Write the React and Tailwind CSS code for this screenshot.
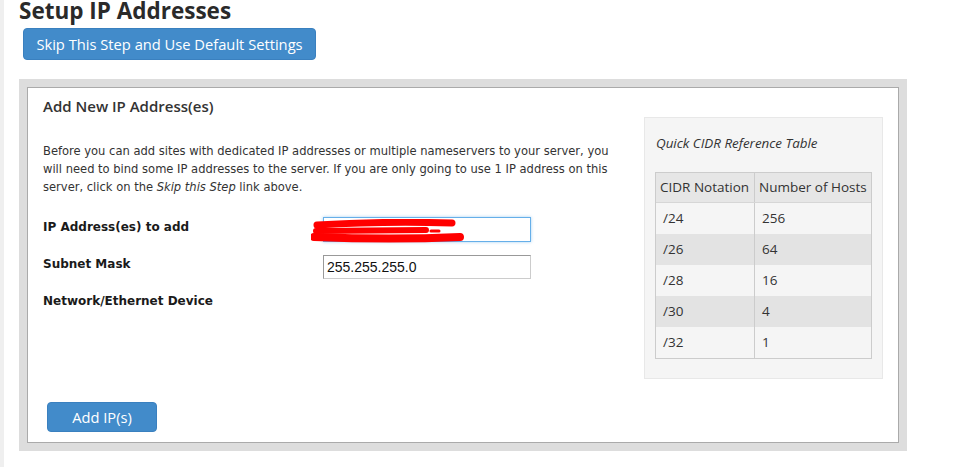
const cidrRows = [
  { cidr: '/24', hosts: '256' },
  { cidr: '/26', hosts: '64' },
  { cidr: '/28', hosts: '16' },
  { cidr: '/30', hosts: '4' },
  { cidr: '/32', hosts: '1' },
];

const openSans = { fontFamily: '"Open Sans", "Liberation Sans", sans-serif' };

function RedactedInput() {
  return (
    <div className="relative h-[25px] w-[208px]">
      <input
        type="text"
        readOnly
        className="h-full w-full border border-[#66afe9] bg-white px-[4px] shadow-[0_0_3px_rgba(102,175,233,0.6)] outline-none"
      />
      <svg
        className="pointer-events-none absolute left-[-12px] top-[2px]"
        width="160"
        height="26"
        viewBox="0 0 160 26"
        fill="none"
      >
        <path d="M6 6 Q70 2 141 4" stroke="#ff0000" strokeWidth="7" strokeLinecap="round" />
        <path d="M5 12 L115 11" stroke="#ff0000" strokeWidth="6" strokeLinecap="round" />
        <path d="M120 12 L128 12" stroke="#ff0000" strokeWidth="3" strokeLinecap="round" />
        <path d="M3 18 Q80 21 149 18" stroke="#ff0000" strokeWidth="8" strokeLinecap="round" />
      </svg>
    </div>
  );
}

function CidrTable() {
  return (
    <aside className="h-[262px] w-[239px] shrink-0 border border-[#e8e8e8] bg-[#f5f5f5] px-[10px] pt-[16px]" style={openSans}>
      <p className="pl-px text-[13.4px] italic leading-[18px] text-[#333]">Quick CIDR Reference Table</p>
      <div className="mt-[20px] border border-[#cccccc] text-[13.5px] text-[#333]">
        <div className="grid h-[30px] grid-cols-[99px_1fr] border-b border-[#d6d6d6] bg-[#e6e6e6]">
          <div className="flex items-center border-r border-[#cccccc] px-[4px]">CIDR Notation</div>
          <div className="flex items-center px-[4px]">Number of Hosts</div>
        </div>
        {cidrRows.map((row, i) => (
          <div
            key={row.cidr}
            className={`grid h-[31px] grid-cols-[99px_1fr] ${i % 2 === 1 ? 'bg-[#e3e3e3]' : 'bg-[#f5f5f5]'}`}
          >
            <div className="flex items-center border-r border-[#cccccc] px-[7px]">{row.cidr}</div>
            <div className="flex items-center px-[7px]">{row.hosts}</div>
          </div>
        ))}
      </div>
    </aside>
  );
}

export default function App() {
  return (
    <div className="flex min-h-[467px] bg-white">
      <div className="w-[4px] shrink-0 bg-[#efefef]" />
      <div className="flex-1 pl-[15px]">
        <h1 className="pt-px text-[22.5px] font-bold leading-[20px] text-[#2a2a2a]" style={openSans}>
          Setup IP Addresses
        </h1>
        <button
          type="button"
          className="ml-[4px] mt-[7px] h-[32px] w-[293px] rounded-[4px] border border-[#3a80bf] bg-[#428bca] text-[14.7px] text-white"
          style={openSans}
        >
          Skip This Step and Use Default Settings
        </button>

        <div className="mt-[19px] w-[888px] bg-[#dddddd] p-[8px]">
          <div className="border border-[#aaaaaa] bg-white px-[15px] pb-[10px] pt-[8px]">
            <h2 className="text-[15px] font-semibold leading-[20px] text-[#333]" style={openSans}>
              Add New IP Address(es)
            </h2>

            <div className="mt-px flex">
              <div className="min-w-0 flex-1">
                <p
                  className="mt-[25px] whitespace-nowrap text-[12.8px] leading-[18px] text-[#333]"
                  style={{ fontFamily: '"DejaVu Sans Condensed", "Open Sans", sans-serif' }}
                >
                  Before you can add sites with dedicated IP addresses or multiple nameservers to your server, you
                  <br />
                  will need to bind some IP addresses to the server. If you are only going to use 1 IP address on this
                  <br />
                  server, click on the <em>Skip this Step</em> link above.
                </p>

                <div
                  className="mt-[21px] text-[12px] font-bold leading-[16px] text-[#1a1a1a]"
                  style={{ fontFamily: '"DejaVu Sans", Verdana, sans-serif' }}
                >
                  <div className="flex">
                    <label className="w-[280px] pt-[2px]">IP Address(es) to add</label>
                    <RedactedInput />
                  </div>
                  <div className="mt-[13px] flex">
                    <label className="w-[280px] pt-px">Subnet Mask</label>
                    <input
                      type="text"
                      readOnly
                      defaultValue="255.255.255.0"
                      className="h-[24px] w-[208px] border border-b-[#cccccc] border-l-[#999999] border-r-[#cccccc] border-t-[#999999] bg-white px-[3px] text-[14px] font-normal text-[#111] outline-none"
                      style={{ fontFamily: '"Liberation Sans", Arial, sans-serif' }}
                    />
                  </div>
                  <div className="mt-[13px] flex">
                    <label className="w-[280px] pt-px">Network/Ethernet Device</label>
                  </div>
                </div>
              </div>

              <CidrTable />
            </div>

            <button
              type="button"
              className="ml-[4px] mt-[23px] h-[30px] w-[110px] rounded-[4px] border border-[#3a80bf] bg-[#428bca] text-[14.7px] text-white"
              style={openSans}
            >
              Add IP(s)
            </button>
          </div>
        </div>
      </div>
    </div>
  );
}
